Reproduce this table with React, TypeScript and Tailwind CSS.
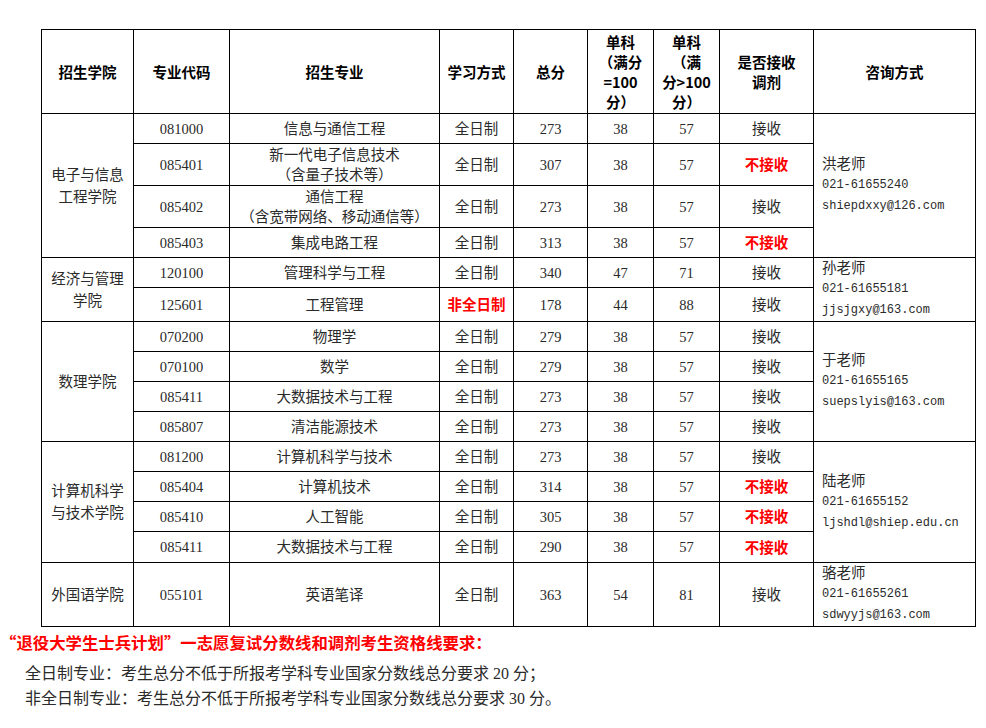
import React from "react";

const serif = { fontFamily: '"Liberation Serif", "Noto Sans CJK SC", serif' };
const heiFont = { fontFamily: '"Noto Sans CJK SC", "Liberation Sans", sans-serif' };
const mono = { fontFamily: '"Liberation Mono", "Noto Sans CJK SC", monospace' };

type Row = {
  code: string;
  major: React.ReactNode;
  mode: string;
  total: string;
  s1: string;
  s2: string;
  accept: boolean;
  h: number;
};

type Group = {
  college: React.ReactNode;
  contact: [string, string, string];
  rows: Row[];
};

const groups: Group[] = [
  {
    college: (
      <>
        电子与信息
        <br />
        工程学院
      </>
    ),
    contact: ["洪老师", "021-61655240", "shiepdxxy@126.com"],
    rows: [
      { code: "081000", major: "信息与通信工程", mode: "全日制", total: "273", s1: "38", s2: "57", accept: true, h: 30 },
      {
        code: "085401",
        major: (
          <>
            新一代电子信息技术
            <br />
            （含量子技术等）
          </>
        ),
        mode: "全日制",
        total: "307",
        s1: "38",
        s2: "57",
        accept: false,
        h: 42,
      },
      {
        code: "085402",
        major: (
          <>
            通信工程
            <br />
            （含宽带网络、移动通信等）
          </>
        ),
        mode: "全日制",
        total: "273",
        s1: "38",
        s2: "57",
        accept: true,
        h: 42,
      },
      { code: "085403", major: "集成电路工程", mode: "全日制", total: "313", s1: "38", s2: "57", accept: false, h: 30 },
    ],
  },
  {
    college: (
      <>
        经济与管理
        <br />
        学院
      </>
    ),
    contact: ["孙老师", "021-61655181", "jjsjgxy@163.com"],
    rows: [
      { code: "120100", major: "管理科学与工程", mode: "全日制", total: "340", s1: "47", s2: "71", accept: true, h: 30 },
      { code: "125601", major: "工程管理", mode: "非全日制", total: "178", s1: "44", s2: "88", accept: true, h: 33 },
    ],
  },
  {
    college: "数理学院",
    contact: ["于老师", "021-61655165", "suepslyis@163.com"],
    rows: [
      { code: "070200", major: "物理学", mode: "全日制", total: "279", s1: "38", s2: "57", accept: true, h: 30 },
      { code: "070100", major: "数学", mode: "全日制", total: "279", s1: "38", s2: "57", accept: true, h: 30 },
      { code: "085411", major: "大数据技术与工程", mode: "全日制", total: "273", s1: "38", s2: "57", accept: true, h: 30 },
      { code: "085807", major: "清洁能源技术", mode: "全日制", total: "273", s1: "38", s2: "57", accept: true, h: 30 },
    ],
  },
  {
    college: (
      <>
        计算机科学
        <br />
        与技术学院
      </>
    ),
    contact: ["陆老师", "021-61655152", "ljshdl@shiep.edu.cn"],
    rows: [
      { code: "081200", major: "计算机科学与技术", mode: "全日制", total: "273", s1: "38", s2: "57", accept: true, h: 30 },
      { code: "085404", major: "计算机技术", mode: "全日制", total: "314", s1: "38", s2: "57", accept: false, h: 30 },
      { code: "085410", major: "人工智能", mode: "全日制", total: "305", s1: "38", s2: "57", accept: false, h: 30 },
      { code: "085411", major: "大数据技术与工程", mode: "全日制", total: "290", s1: "38", s2: "57", accept: false, h: 31 },
    ],
  },
  {
    college: "外国语学院",
    contact: ["骆老师", "021-61655261", "sdwyyjs@163.com"],
    rows: [
      { code: "055101", major: "英语笔译", mode: "全日制", total: "363", s1: "54", s2: "81", accept: true, h: 63 },
    ],
  },
];

const cell = "border border-black text-center align-middle p-0";

export default function App() {
  return (
    <div className="bg-white w-[986px] h-[728px] overflow-hidden text-[#2a2a2a]" style={serif}>
      <div className="pt-[29px] pl-[41px]">
        <table className="border-collapse border border-black table-fixed w-[934px] text-[14.5px] leading-[20px]">
          <colgroup>
            <col className="w-[92px]" />
            <col className="w-[96px]" />
            <col className="w-[210px]" />
            <col className="w-[74px]" />
            <col className="w-[74px]" />
            <col className="w-[66px]" />
            <col className="w-[66px]" />
            <col className="w-[94px]" />
            <col className="w-[162px]" />
          </colgroup>
          <thead>
            <tr className="h-[84px] font-bold text-black leading-[20px]" style={heiFont}>
              <th className={cell}>招生学院</th>
              <th className={cell}>专业代码</th>
              <th className={cell}>招生专业</th>
              <th className={cell}>学习方式</th>
              <th className={cell}>总分</th>
              <th className={cell}>
                单科
                <br />
                （满分
                <br />
                =100
                <br />
                分）
              </th>
              <th className={cell}>
                单科
                <br />
                （满
                <br />
                分&gt;100
                <br />
                分）
              </th>
              <th className={cell}>
                是否接收
                <br />
                调剂
              </th>
              <th className={cell}>咨询方式</th>
            </tr>
          </thead>
          <tbody>
            {groups.map((g, gi) =>
              g.rows.map((r, ri) => (
                <tr key={`${gi}-${ri}`} style={{ height: r.h }}>
                  {ri === 0 && (
                    <td className={`${cell} leading-[22px]`} rowSpan={g.rows.length}>
                      {g.college}
                    </td>
                  )}
                  <td className={cell}>{r.code}</td>
                  <td className={cell}>{r.major}</td>
                  <td className={cell}>
                    {r.mode === "非全日制" ? (
                      <span className="font-bold text-[#ff0000]" style={heiFont}>
                        {r.mode}
                      </span>
                    ) : (
                      r.mode
                    )}
                  </td>
                  <td className={cell}>{r.total}</td>
                  <td className={cell}>{r.s1}</td>
                  <td className={cell}>{r.s2}</td>
                  <td className={cell}>
                    {r.accept ? (
                      "接收"
                    ) : (
                      <span className="font-bold text-[#ff0000]" style={heiFont}>
                        不接收
                      </span>
                    )}
                  </td>
                  {ri === 0 && (
                    <td className="border border-black align-middle text-left pl-[8px] leading-[21px]" rowSpan={g.rows.length}>
                      <div className="text-[14.5px]">{g.contact[0]}</div>
                      <div className="text-[12px]" style={mono}>
                        {g.contact[1]}
                      </div>
                      <div className="text-[12px]" style={mono}>
                        {g.contact[2]}
                      </div>
                    </td>
                  )}
                </tr>
              ))
            )}
          </tbody>
        </table>
      </div>
      <div className="pt-[3px] text-[16px] leading-[25px]">
        <div className="font-bold text-[#ff0000] text-[16.4px]" style={heiFont}>
          “退役大学生士兵计划”一志愿复试分数线和调剂考生资格线要求：
        </div>
        <div className="pl-[25px] pt-[6px]">全日制专业：考生总分不低于所报考学科专业国家分数线总分要求 20 分；</div>
        <div className="pl-[25px]">非全日制专业：考生总分不低于所报考学科专业国家分数线总分要求 30 分。</div>
      </div>
    </div>
  );
}
